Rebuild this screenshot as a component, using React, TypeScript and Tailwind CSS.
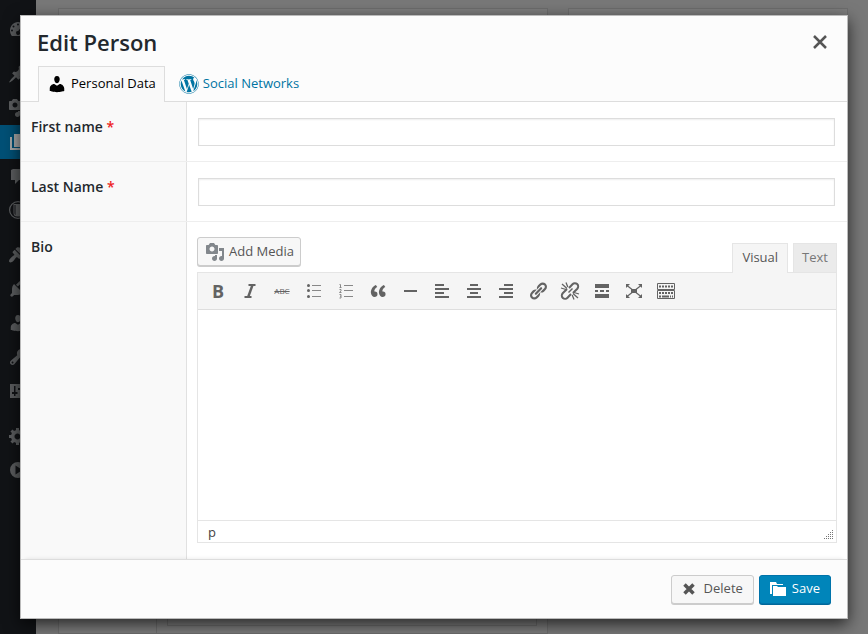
import React from "react";
import { FaWordpress } from "react-icons/fa";

function Glyph({ d, className = "size-5" }: { d: string; className?: string }) {
  return (
    <svg viewBox="0 0 20 20" className={className} fill="currentColor" aria-hidden="true">
      <path fillRule="evenodd" d={d} />
    </svg>
  );
}

const paths = {
  dashboard:
    "M3.8 17h12.4A8.4 8.4 0 0 0 18 11.500C18 6.800 14.400 3 10 3s-8 3.800-8 8.500c0 2 .7 4 1.800 5.500zM10 4.500a1 1 0 1 1 0 2 1 1 0 0 1 0-2zM5.500 6.500a1 1 0 1 1 0 2 1 1 0 0 1 0-2zm9.200-.2-3 6.500a2 2 0 1 1-1.500-.8zM4 10.500a1 1 0 1 1 0 2 1 1 0 0 1 0-2zm12 0a1 1 0 1 1 0 2 1 1 0 0 1 0-2z",
  pin: "M10.44 3.02l1.82-1.82 6.36 6.35-1.83 1.82c-1.05-.68-2.48-.57-3.41.36l-.75.75c-.92.93-1.04 2.35-.35 3.41l-1.83 1.82-2.41-2.41-2.8 2.79c-.42.42-3.38 2.71-3.8 2.29s1.86-3.39 2.28-3.81l2.79-2.79L4.1 9.36l1.83-1.82c1.05.69 2.48.57 3.4-.36l.75-.75c.93-.92 1.05-2.35.36-3.41z",
  media:
    "M13 11V4c0-.55-.45-1-1-1h-1.670L9 1H5L3.670 3H2c-.55 0-1 .45-1 1v7c0 .55.45 1 1 1h10c.55 0 1-.45 1-1zM7 4.500c1.380 0 2.500 1.120 2.500 2.500S8.380 9.500 7 9.500 4.500 8.380 4.500 7 5.620 4.500 7 4.500zM14 6h5v10.500c0 1.380-1.120 2.500-2.500 2.500S14 17.880 14 16.500s1.120-2.500 2.500-2.500c.17 0 .34.02.5.05V9h-3V6zm-4 8.050V13h2v3.500c0 1.380-1.120 2.500-2.500 2.500S7 17.880 7 16.500 8.120 14 9.500 14c.17 0 .34.02.5.05z",
  pages: "M6 15V2h12v13H6zM5 16h10v2H2V5h2v11z",
  comments: "M5 3h9c1.100 0 2 .9 2 2v7c0 1.100-.9 2-2 2h-3l-4 4v-4H3V4z",
  ring: "M10 1a9 9 0 1 1 0 18 9 9 0 0 1 0-18zm0 1.200a7.800 7.800 0 1 0 0 15.600 7.800 7.800 0 0 0 0-15.600zM5.500 4H16v9c0 2-1.500 3.500-4 3.500H9c-2 0-3.500-1-3.500-3.500zm1 1v8c0 1 .5 1.800 1 2.200V5z",
  appearance:
    "M14.48 11.06L7.41 3.99l1.5-1.5c.5-.56 2.3-.47 3.51.32 1.21.8 1.43 1.28 2.91 2.1 1.18.64 2.45 1.26 4.45.85zm-.71.71L6.7 4.7 4.93 6.47c-.39.39-.39 1.02 0 1.41l1.06 1.06c.39.39.39 1.03 0 1.42-.6.6-1.43 1.11-2.21 1.69-.35.26-.7.53-1.01.84C1.43 14.23.4 16.08 1.4 17.07c.99 1 2.84-.03 4.18-1.36.31-.31.58-.66.85-1.02.57-.78 1.08-1.61 1.69-2.21.39-.39 1.02-.39 1.41 0l1.06 1.06c.39.39 1.02.39 1.41 0z",
  plugins:
    "M13.11 4.36L9.87 7.6 8 5.73l3.24-3.24c.35-.34 1.05-.2 1.56.32.52.51.66 1.21.31 1.55zm-8 1.77l.91-1.12 9.01 9.01-1.19.84c-.71.71-2.63 1.16-3.82 1.16H6.14L4.9 17.26c-.59.59-1.54.59-2.12 0-.59-.58-.59-1.53 0-2.12l1.24-1.24v-3.88c0-1.13.4-3.19 1.09-3.89zm7.26 3.97l3.24-3.24c.34-.35 1.04-.21 1.55.31.52.51.66 1.21.31 1.55l-3.24 3.25z",
  person:
    "M10 9.25c-2.27 0-2.73-3.44-2.73-3.44C7 4.02 7.82 2 9.97 2c2.16 0 2.98 2.02 2.71 3.81 0 0-.41 3.44-2.68 3.44zm0 2.57L12.72 10c2.39 0 4.52 2.33 4.52 4.53v2.49s-3.65 1.13-7.24 1.13c-3.65 0-7.24-1.13-7.24-1.13v-2.49c0-2.25 1.94-4.48 4.47-4.48z",
  tools:
    "M16.68 9.77c-1.34 1.34-3.3 1.67-4.95.99l-5.41 6.52c-.99.99-2.59.99-3.58 0s-.99-2.59 0-3.57l6.52-5.42c-.68-1.65-.35-3.61.99-4.95 1.28-1.28 3.12-1.62 4.72-1.06l-2.89 2.89 2.82 2.82 2.86-2.87c.53 1.58.18 3.39-1.08 4.65zM3.81 16.21c.4.39 1.04.39 1.43 0 .4-.4.4-1.04 0-1.43-.39-.4-1.03-.4-1.43 0-.39.39-.39 1.03 0 1.43z",
  settings:
    "M2 3h16v14H2zM6 5v6H4v2h2v2h1.500v-2h2v-2h-2V5zm6 0v2h-2v2h2v6h1.500V9h2V7h-2V5z",
  gear: "M18 12h-2.18c-.17.7-.44 1.35-.81 1.93l1.54 1.54-2.1 2.1-1.54-1.54c-.58.36-1.23.63-1.91.79V19H8v-2.18c-.68-.16-1.33-.43-1.91-.79l-1.54 1.54-2.12-2.12 1.54-1.54c-.36-.58-.63-1.23-.79-1.91H1V9.03h2.17c.16-.7.44-1.35.8-1.94L2.43 5.55l2.1-2.1 1.54 1.54c.58-.37 1.24-.64 1.93-.81V2h3v2.18c.68.16 1.33.43 1.91.79l1.54-1.54 2.12 2.12-1.54 1.54c.36.59.64 1.24.8 1.94H18V12zm-8.5 1.5c1.66 0 3-1.34 3-3s-1.34-3-3-3-3 1.34-3 3 1.34 3 3 3z",
  play: "M10 2a8 8 0 1 1 0 16 8 8 0 0 1 0-16zM7.500 5.500v9l7-4.500z",
  quote:
    "M9.49 13.22c0-.74-.2-1.38-.61-1.9-.62-.78-1.83-.88-2.53-.72-.29-1.65 1.11-3.75 2.92-4.65L7.88 4c-2.73 1.3-5.42 4.28-4.96 8.05C3.21 14.43 4.59 16 6.54 16c.85 0 1.56-.25 2.12-.75s.83-1.18.83-2.03zm8.05 0c0-.74-.2-1.38-.61-1.9-.63-.78-1.83-.88-2.53-.72-.29-1.65 1.11-3.75 2.92-4.65L15.93 4c-2.73 1.3-5.41 4.28-4.95 8.05.29 2.38 1.66 3.95 3.61 3.95.85 0 1.56-.25 2.12-.75s.83-1.18.83-2.03z",
  rule: "M4 9h13v2H4z",
  left: "M3 3h9v2H3zM3 7h14v2H3zM3 11h9v2H3zM3 15h14v2H3z",
  center: "M6 3h8v2H6zM3 7h14v2H3zM6 11h8v2H6zM3 15h14v2H3z",
  right: "M8 3h9v2H8zM3 7h14v2H3zM8 11h9v2H8zM3 15h14v2H3z",
  link: "M17.74 2.76c1.68 1.69 1.68 4.41 0 6.1l-1.53 1.52c-1.12 1.12-2.7 1.47-4.14 1.09l2.62-2.61.76-.77.76-.76c.84-.84.84-2.2 0-3.04-.84-.85-2.2-.85-3.04 0l-.77.76-3.38 3.38c-.37-1.44-.02-3.02 1.1-4.14l1.52-1.53c1.69-1.68 4.42-1.68 6.1 0zM8.59 13.43l5.34-5.34c.42-.42.42-1.1 0-1.52-.44-.43-1.13-.39-1.53 0l-5.33 5.34c-.42.42-.42 1.1 0 1.52.44.43 1.13.39 1.52 0zm-.76 2.29l4.14-4.15c.38 1.44.03 3.02-1.09 4.14l-1.52 1.53c-1.69 1.68-4.41 1.68-6.1 0-1.68-1.68-1.68-4.42 0-6.1l1.53-1.52c1.12-1.12 2.7-1.47 4.14-1.1l-4.14 4.15c-.85.84-.85 2.2 0 3.05.84.84 2.2.84 3.04 0z",
  more: "M3 3h14v4H3zM3 9h3v2H3zM8 9h4v2H8zM14 9h3v2h-3zM3 13h14v4H3z",
  folder: "M2 3h6l1 2h6v1H4v9H2zM5 7h4l1 1h8v9H5z",
};

function ItalicIcon() {
  return (
    <svg viewBox="0 0 20 20" className="size-5" fill="none" stroke="currentColor" strokeWidth="2" aria-hidden="true">
      <path d="M8.500 4h7M4.500 16h7" />
      <path d="M12.500 4 8 16.500" strokeWidth="2.400" />
    </svg>
  );
}

function BulletIcon() {
  return (
    <svg viewBox="0 0 20 20" className="size-5" aria-hidden="true">
      <path fill="#888888" d="M8 4h9v1H8zM8 9h9v1H8zM8 15h9v1H8z" />
      <g fill="currentColor">
        <circle cx="4.500" cy="4.500" r="1.500" />
        <circle cx="4.500" cy="9.500" r="1.500" />
        <circle cx="4.500" cy="15.500" r="1.500" />
      </g>
    </svg>
  );
}

function NumberedIcon() {
  return (
    <svg viewBox="0 0 20 20" className="size-5" aria-hidden="true">
      <path fill="#888888" d="M8 4h9v1H8zM8 9h9v1H8zM8 15h9v1H8z" />
      <g fill="none" stroke="#888888" strokeWidth="1">
        <path d="M3.500 3.500h1v3M3.500 6.500h2" />
        <path d="M3.500 8.500h1.500v1.300l-1.500 1.700h2" />
        <path d="M3.500 13.500h1.500v3.500h-1.500M4 15.200h1" />
      </g>
    </svg>
  );
}

function UnlinkIcon() {
  return (
    <svg viewBox="0 0 20 20" className="size-5" fill="none" stroke="currentColor" strokeWidth="2" aria-hidden="true">
      <path d="M9 7l3.500-3.800a3.200 3.200 0 0 1 4.800 4.500L13 12" />
      <path d="M11 13l-3.500 3.800a3.200 3.200 0 0 1-4.800-4.500L7 8" />
      <path d="M8.500 11.500l4-4" strokeWidth="1.400" />
      <path strokeWidth="1.300" d="M2 3l5 4.500M6 1.500l1.800 4.500M1 7l5 1.500M18 17l-5-4.500M14 18.500L12.200 14M19 13l-5-1.500" />
    </svg>
  );
}

function ExpandIcon() {
  return (
    <svg viewBox="0 0 20 20" className="size-5" aria-hidden="true">
      <path stroke="currentColor" strokeWidth="1.200" d="M3 4.500l14 11M17 4.500l-14 11" />
      <path fill="currentColor" d="M7 8h6v4H7zM2 3h4L2 7zM18 3h-4l4 4zM2 17h4l-4-4zM18 17h-4l4-4z" />
    </svg>
  );
}

function KeyboardIcon() {
  return (
    <svg viewBox="0 0 20 20" className="size-5" fill="none" stroke="currentColor" aria-hidden="true">
      <path d="M1.500 2.500h17v6h-17zM1.500 9.500h17v8h-17z" />
      <path strokeDasharray="2 1" d="M3 5.500h14M3 12h14" strokeWidth="2" />
      <path d="M3 15.500h2M6 15.500h7M14 15.500h1M16 15.500h1" strokeWidth="2" />
    </svg>
  );
}

const tools: { name: string; icon: React.ReactNode }[] = [
  { name: "Bold", icon: <span className="text-[18px] leading-5 font-bold">B</span> },
  { name: "Italic", icon: <ItalicIcon /> },
  { name: "Strikethrough", icon: <span className="text-[8px] leading-5 line-through">ABC</span> },
  { name: "Bulleted list", icon: <BulletIcon /> },
  { name: "Numbered list", icon: <NumberedIcon /> },
  { name: "Blockquote", icon: <Glyph d={paths.quote} /> },
  { name: "Horizontal line", icon: <Glyph d={paths.rule} /> },
  { name: "Align left", icon: <Glyph d={paths.left} /> },
  { name: "Align center", icon: <Glyph d={paths.center} /> },
  { name: "Align right", icon: <Glyph d={paths.right} /> },
  { name: "Insert link", icon: <Glyph d={paths.link} /> },
  { name: "Remove link", icon: <UnlinkIcon /> },
  { name: "Read more", icon: <Glyph d={paths.more} /> },
  { name: "Fullscreen", icon: <ExpandIcon /> },
  { name: "Toolbar toggle", icon: <KeyboardIcon /> },
];

const menu: { name: string; d: string; active?: boolean }[][] = [
  [{ name: "Dashboard", d: paths.dashboard }],
  [
    { name: "Posts", d: paths.pin },
    { name: "Media", d: paths.media },
    { name: "Pages", d: paths.pages, active: true },
    { name: "Comments", d: paths.comments },
    { name: "Library", d: paths.ring },
  ],
  [
    { name: "Appearance", d: paths.appearance },
    { name: "Plugins", d: paths.plugins },
    { name: "Users", d: paths.person },
    { name: "Tools", d: paths.tools },
    { name: "Settings", d: paths.settings },
  ],
  [
    { name: "Options", d: paths.gear },
    { name: "Collapse", d: paths.play },
  ],
];

function AdminPage() {
  return (
    <div className="flex h-full" aria-hidden="true">
      <nav className="flex w-9 shrink-0 flex-col gap-[11px] bg-[#111316] pt-3">
        {menu.map((group, i) => (
          <ul key={i}>
            {group.map((item) => (
              <li
                key={item.name}
                className={
                  item.active
                    ? "flex h-[34px] items-center bg-[#005076] pl-2 text-[#a9a9a9]"
                    : "flex h-[34px] items-center pl-2 text-[#5c5e60]"
                }
              >
                <Glyph d={item.d} className="size-5 shrink-0" />
              </li>
            ))}
          </ul>
        ))}
      </nav>
      <main className="flex flex-1 items-start gap-5 pr-5 pl-[22px]">
        <div className="flex h-full flex-[490] pt-2">
          <section className="flex flex-1 items-end border border-[#6d6d6d] bg-[#7d7d7d]">
            <div className="h-1/2 w-[98px] border-r border-[#6d6d6d]" />
            <div className="h-1/2 flex-1 px-[10px] pb-[7px]">
              <div className="h-full border border-[#6d6d6d]" />
            </div>
          </section>
        </div>
        <div className="flex h-1/2 flex-[280] pt-2">
          <section className="flex-1 border border-[#6d6d6d] bg-[#7d7d7d]" />
        </div>
      </main>
    </div>
  );
}

function FieldRow({ id, label, required, children }: { id: string; label: string; required?: boolean; children: React.ReactNode }) {
  return (
    <div className="flex border-b border-[#eeeeee] last:flex-1 last:border-b-0">
      <div className="w-[166px] shrink-0 border-r border-[#e1e1e1] bg-[#f9f9f9] pt-[15px] pl-[10px]">
        <label htmlFor={id} className="block text-[14px] leading-5 font-semibold text-[#23282d]">
          {label} {required && <span className="text-[#ee2222]">*</span>}
        </label>
      </div>
      <div className="flex min-w-0 flex-1 flex-col">{children}</div>
    </div>
  );
}

function TextField({ id }: { id: string }) {
  return (
    <div className="pt-4 pr-3 pb-[15px] pl-[11px]">
      <input id={id} type="text" className="block h-7 w-full border border-[#dddddd] bg-white px-2 text-[13px] shadow-[inset_0_1px_2px_rgba(0,0,0,0.07)] outline-none" />
    </div>
  );
}

function Editor() {
  return (
    <div className="flex flex-1 flex-col pt-[15px] pr-[10px] pb-4 pl-[10px]">
      <div className="flex h-[35px] items-start justify-between">
        <button type="button" className="flex h-[29px] items-center gap-1 rounded-[3px] border border-[#cccccc] bg-[#f7f7f7] pr-[6px] pl-[7px] text-[13px] text-[#555555] shadow-[0_1px_0_#cccccc]">
          <span className="text-[#82878c]"><Glyph d={paths.media} /></span>
          Add Media
        </button>
        <div className="relative flex gap-[5px] pt-[6px]">
          <button type="button" className="h-[30px] border border-b-0 border-[#e5e5e5] bg-[#f5f5f5] px-[9px] pb-[2px] text-[13px] text-[#555555]">Visual</button>
          <button type="button" className="h-[29px] border border-b-0 border-[#e5e5e5] bg-[#ebebeb] px-2 text-[13px] text-[#777777]">Text</button>
        </div>
      </div>
      <div className="flex flex-1 flex-col border border-[#e5e5e5]">
        <div className="flex h-[37px] items-center border-b border-[#dedede] bg-[#f5f5f5] px-1 text-[#636363]">
          {tools.map((tool) => (
            <button key={tool.name} type="button" aria-label={tool.name} className="flex h-7 w-8 items-center justify-center">
              {tool.icon}
            </button>
          ))}
        </div>
        <textarea id="bio" className="block w-full flex-1 resize-none bg-white p-[10px] text-[13px] outline-none" />
        <div className="flex h-[22px] items-center justify-between border-t border-[#e5e5e5] pr-[2px] pl-[10px] text-[13px] leading-5 text-[#444444]">
          <span>p</span>
          <svg viewBox="0 0 10 12" className="h-3 w-[10px] self-end" fill="#777777" aria-hidden="true">
            {[0, 1, 2, 3, 4].flatMap((row) =>
              Array.from({ length: row + 1 }, (_, i) => (
                <rect key={`${row}-${i}`} x={8 - i * 2} y={row * 2} width="1" height="1" />
              )),
            )}
          </svg>
        </div>
      </div>
    </div>
  );
}

function EditPersonDialog() {
  return (
    <div role="dialog" aria-labelledby="dialog-title" className="flex w-full flex-col border border-[#bbbbbb] bg-white shadow-[0_5px_15px_rgba(0,0,0,0.7)]">
      <header className="bg-[#fcfcfc]">
        <div className="flex h-[50px] items-center justify-between pt-px pr-[18px] pl-4">
          <h1 id="dialog-title" className="text-[22px] leading-7 font-semibold text-[#23282d]">Edit Person</h1>
          <button type="button" aria-label="Close" className="flex size-[18px] items-center justify-center text-[#555555]">
            <svg viewBox="0 0 18 18" className="size-[18px]" stroke="currentColor" strokeWidth="2.500" aria-hidden="true">
              <path d="M3 3l12 12M15 3L3 15" />
            </svg>
          </button>
        </div>
        <div className="flex items-end">
          <div className="w-[17px] border-b border-[#dddddd]" />
          <a href="#personal" className="flex h-9 items-center gap-1 border border-b-0 border-[#dddddd] bg-[#f9f9f9] px-2 pb-px text-[13px] text-black">
            <Glyph d={paths.person} />
            Personal Data
          </a>
          <div className="flex h-9 flex-1 border-b border-[#dddddd] pl-[14px]">
            <a href="#social" className="flex items-center gap-1 text-[13px] text-[#0074a2]">
              <FaWordpress className="size-5" aria-hidden="true" />
              Social Networks
            </a>
          </div>
        </div>
      </header>
      <form className="flex flex-1 flex-col">
        <FieldRow id="first-name" label="First name" required>
          <TextField id="first-name" />
        </FieldRow>
        <FieldRow id="last-name" label="Last Name" required>
          <TextField id="last-name" />
        </FieldRow>
        <FieldRow id="bio" label="Bio">
          <Editor />
        </FieldRow>
      </form>
      <footer className="flex h-[59px] items-center justify-end gap-[5px] border-t border-[#dddddd] bg-[#fcfcfc] pr-4 shadow-[0_-4px_4px_-4px_rgba(0,0,0,0.1)]">
        <button type="button" className="flex h-[29px] items-center gap-2 rounded-[3px] border border-[#cccccc] bg-[#f7f7f7] px-[10px] text-[13px] text-[#555555] shadow-[0_1px_0_#cccccc]">
          <svg viewBox="0 0 14 14" className="size-[14px]" stroke="currentColor" strokeWidth="3.500" aria-hidden="true">
            <path d="M2.500 2.500l9 9M11.500 2.500l-9 9" />
          </svg>
          Delete
        </button>
        <button type="button" className="flex h-[29px] items-center gap-1 rounded-[3px] border border-[#0073aa] bg-[#0085ba] pr-[10px] pl-2 text-[13px] text-white shadow-[0_1px_0_#006799]">
          <Glyph d={paths.folder} />
          Save
        </button>
      </footer>
    </div>
  );
}

export default function App() {
  return (
    <div className="relative h-screen overflow-hidden bg-[#787878] font-['Open_Sans','Noto_Sans',sans-serif]">
      <AdminPage />
      <div className="absolute inset-0 flex px-5 pt-[15px] pb-[15px]">
        <EditPersonDialog />
      </div>
    </div>
  );
}
